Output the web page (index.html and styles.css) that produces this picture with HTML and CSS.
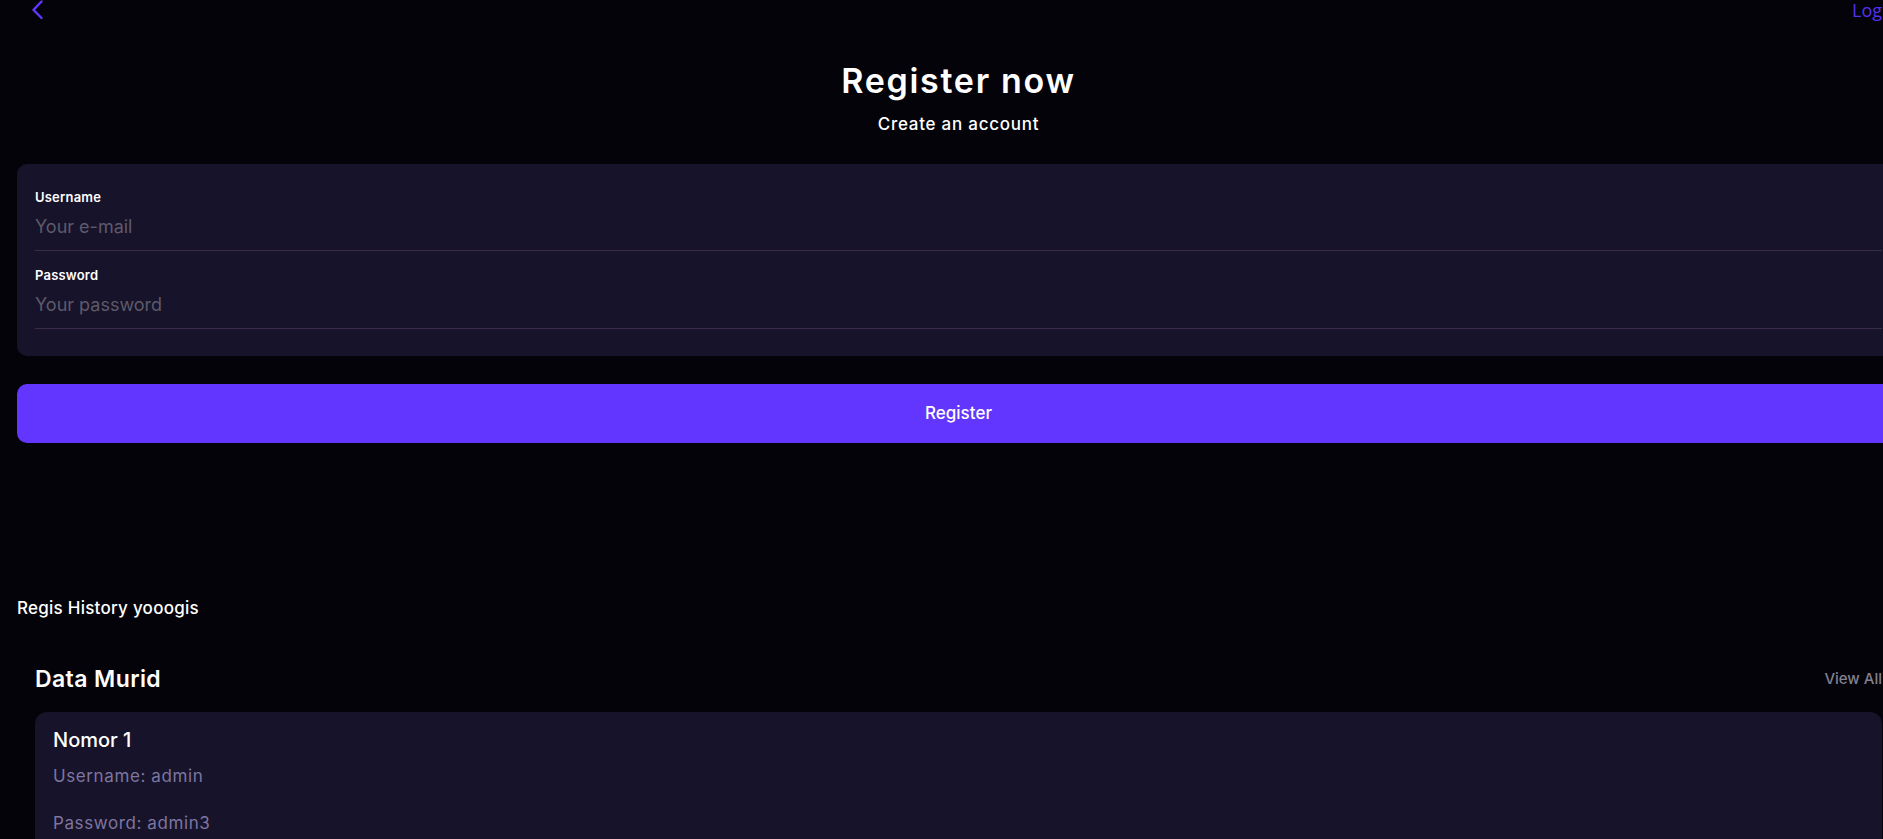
FILE: index.html
```html
<!DOCTYPE html>
<html lang="en">
<head>
<meta charset="utf-8">
<title>Register now</title>
<link rel="stylesheet" href="styles.css">
</head>
<body>
<div class="page">
  <header class="topbar">
    <a class="back" href="#" aria-label="Back">
      <svg width="14" height="20" viewBox="0 0 14 20"><path d="M10.5 1.5 L2.5 9.8 L10.5 18" fill="none" stroke="#6236ff" stroke-width="2.4" stroke-linecap="round" stroke-linejoin="round"/></svg>
    </a>
    <a class="login" href="#">Login</a>
  </header>

  <section class="intro">
    <h1 class="intro-title">Register now</h1>
    <p class="intro-sub">Create an account</p>
  </section>

  <form class="form-card">
    <div class="field">
      <label class="field-label" for="u">Username</label>
      <input class="field-input" id="u" type="text" placeholder="Your e-mail">
    </div>
    <div class="field">
      <label class="field-label" for="p">Password</label>
      <input class="field-input" id="p" type="password" placeholder="Your password">
    </div>
  </form>

  <button class="btn-primary" type="button">Register</button>

  <h3 class="history">Regis History yooogis</h3>

  <section class="data">
    <div class="data-head">
      <h2 class="data-title">Data Murid</h2>
      <a class="view-all" href="#">View All</a>
    </div>
    <div class="item-card">
      <h4 class="item-title">Nomor 1</h4>
      <p class="item-line">Username: admin</p>
      <p class="item-line">Password: admin3</p>
    </div>
  </section>
</div>
</body>
</html>
```
FILE: styles.css
```css
* { box-sizing: border-box; }
html, body { margin: 0; padding: 0; background: #040309; overflow-x: hidden; }
body { font-family: Inter, "Open Sans", sans-serif; color: #ffffff; }

.page {
  width: 1900px;
  padding-left: 17px;
}

.topbar {
  display: flex;
  justify-content: space-between;
  align-items: flex-start;
  height: 22px;
  padding-left: 14px;
}
.back { display: block; height: 20px; }
.back svg { display: block; }
.login {
  font-family: "Open Sans", sans-serif;
  font-size: 18px;
  line-height: 20px;
  color: #5232f2;
  text-decoration: none;
  width: 48px;
}

.intro { text-align: center; }
.intro-title {
  margin: 39px 0 0;
  font-size: 34px;
  line-height: 40px;
  font-weight: 600;
  letter-spacing: 1.7px;
}
.intro-sub {
  margin: 11px 0 0;
  font-size: 17px;
  line-height: 24px;
  font-weight: 500;
  letter-spacing: 0.75px;
}

.form-card {
  margin-top: 28px;
  background: #17132a;
  border-radius: 10px;
  padding: 24px 18px 27px;
}
.field + .field { margin-top: 15px; }
.field-label {
  display: block;
  font-size: 13px;
  line-height: 18px;
  font-weight: 600;
  color: #ffffff;
  letter-spacing: 0.2px;
}
.field-input {
  display: block;
  width: 100%;
  appearance: none;
  background: transparent;
  border: none;
  border-bottom: 1px solid #3a2b4c;
  outline: none;
  padding: 9px 0 11px;
  font-family: inherit;
  font-size: 18px;
  line-height: 24px;
  color: #ffffff;
}
.field-input::placeholder { color: #5d5a6b; }

.btn-primary {
  display: block;
  width: 100%;
  margin-top: 28px;
  height: 59px;
  border: none;
  border-radius: 10px;
  background: #6236ff;
  color: #ffffff;
  font-family: inherit;
  font-size: 17px;
  font-weight: 500;
  line-height: 59px;
  padding: 0;
}

.history {
  margin: 153px 0 0;
  font-size: 17px;
  line-height: 24px;
  font-weight: 500;
  letter-spacing: 0.25px;
}

.data { padding: 0 18px; margin-top: 44px; }
.data-head {
  display: flex;
  justify-content: space-between;
  align-items: center;
}
.data-title {
  margin: 0;
  font-size: 23px;
  line-height: 30px;
  font-weight: 600;
  letter-spacing: 0.4px;
}
.view-all {
  font-size: 15px;
  line-height: 20px;
  color: #83808f;
  text-decoration: none;
  font-weight: 500;
}

.item-card {
  margin-top: 18px;
  background: #17132a;
  border-radius: 12px;
  padding: 14px 18px 20px;
}
.item-title {
  margin: 0;
  font-size: 20px;
  line-height: 28px;
  font-weight: 500;
}
.item-line {
  margin: 10px 0 0;
  font-size: 17px;
  line-height: 24px;
  color: #7d76a0;
  letter-spacing: 0.6px;
}
.item-line + .item-line { margin-top: 23px; }
```
